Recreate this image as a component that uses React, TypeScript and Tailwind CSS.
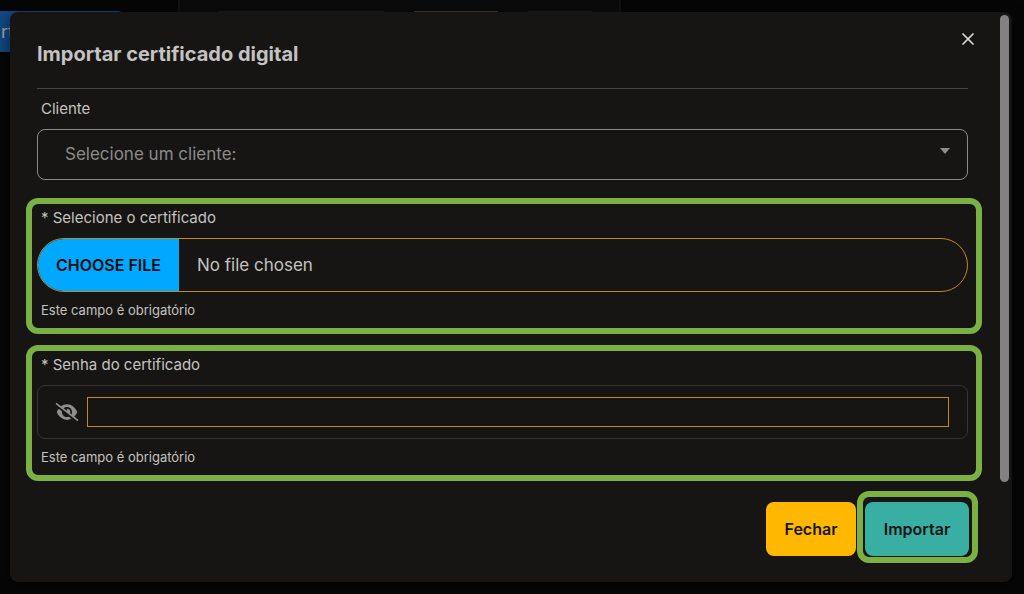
import { X } from 'lucide-react';
import { FaEyeSlash } from 'react-icons/fa6';

function PageBehind() {
  return (
    <div className="absolute inset-0 overflow-hidden bg-[#060606]" aria-hidden="true">
      <div className="flex">
        <div className="w-[178px] pt-[11px]">
          <button
            tabIndex={-1}
            className="h-[41px] w-[122px] rounded-r-sm bg-[#114985] pl-px text-left text-lg text-[#a9a9a9]"
          >
            rt
          </button>
        </div>
        <div className="flex h-[60px] w-[443px] items-start gap-[30px] border-x-2 border-[#131313] bg-[#0b0b0b] pl-[38px] pt-[11px]">
          <div className="h-px w-[166px] bg-[#1c1c1c]" />
          <div className="h-px w-[84px] bg-[#3a3835]" />
          <div className="h-px w-16 bg-[#1c1c1c]" />
        </div>
      </div>
    </div>
  );
}

export default function App() {
  return (
    <div className="relative min-h-screen bg-[#060606] pb-3 pl-[10px] pr-3 pt-3 font-['Inter',sans-serif] text-[#c4c3c1]">
      <PageBehind />

      {/* Modal */}
      <div
        role="dialog"
        aria-labelledby="modal-title"
        className="relative flex min-h-[570px] rounded-lg bg-[#161513] shadow-[0_4px_16px_rgba(0,0,0,0.6)]"
      >
        <div className="flex-1 pl-4">
          {/* Header */}
          <div className="ml-[11px] mr-[14px] flex items-start justify-between border-b border-[#454443] pb-5 pt-[11px]">
            <h1 id="modal-title" className="pt-[17px] text-xl leading-7 font-bold">
              Importar certificado digital
            </h1>
            <button aria-label="Fechar janela" className="-mr-4 p-1.5">
              <X className="h-5 w-5 text-[#dddcda]" strokeWidth={2} />
            </button>
          </div>

          {/* Cliente */}
          <div className="ml-[11px] mr-[14px] pt-2">
            <label htmlFor="cliente" className="block pl-1 text-[15px] leading-6">
              Cliente
            </label>
            <div className="relative mt-2">
              <select
                id="cliente"
                defaultValue=""
                className="h-[51px] w-full appearance-none rounded-lg border border-[#8a8a89] bg-transparent pl-[27px] pr-10 text-[17px] text-[#8b8a89]"
              >
                <option value="">Selecione um cliente:</option>
              </select>
              <svg
                viewBox="0 0 10 6"
                className="pointer-events-none absolute right-[18px] top-[19px] h-1.5 w-2.5 fill-[#8f8e8d]"
              >
                <path d="M0 0h10L5 6z" />
              </svg>
            </div>
          </div>

          {/* Certificado */}
          <div className="mt-[18px] rounded-xl border-6 border-[#7ab142] pb-2 pl-[5px] pr-2 pt-0.5">
            <label htmlFor="certificado" className="block pl-1 text-[15px] leading-6">
              * Selecione o certificado
            </label>
            <input
              id="certificado"
              type="file"
              className="mt-2 block h-[54px] w-full overflow-hidden rounded-full border border-[#c08a26] text-[17px] leading-[52px] file:mr-[18px] file:h-[52px] file:bg-[#00a8ff] file:px-[18px] file:text-base file:font-semibold file:uppercase file:text-[#0b0b0b]"
            />
            <p className="mt-2 pl-1 text-[13px] leading-5">Este campo é obrigatório</p>
          </div>

          {/* Senha */}
          <div className="mt-[11px] rounded-xl border-6 border-[#7ab142] pb-2 pl-[5px] pr-2 pt-0.5">
            <label htmlFor="senha" className="block pl-1 text-[15px] leading-6">
              * Senha do certificado
            </label>
            <div className="mt-2 flex h-[54px] items-center rounded-lg border border-[#353433] pl-[17px] pr-[18px]">
              <button aria-label="Mostrar senha" className="mr-2">
                <FaEyeSlash className="h-[18px] w-6 text-[#8f8d8d]" />
              </button>
              <input
                id="senha"
                type="password"
                className="h-[30px] min-w-0 flex-1 border border-[#c08a26] bg-transparent px-2 outline-none"
              />
            </div>
            <p className="mt-2 pl-1 text-[13px] leading-5">Este campo é obrigatório</p>
          </div>

          {/* Footer */}
          <div className="mt-[10px] flex items-end justify-end gap-px pr-1 text-base font-semibold text-[#141412]">
            <button className="mb-[7px] h-[54px] w-[90px] rounded-lg bg-[#ffb700]">Fechar</button>
            <div className="rounded-xl border-6 border-[#7ab142] pb-px pl-0.5 pr-[3px] pt-[5px]">
              <button className="block h-[54px] w-[104px] rounded-lg bg-[#39aea3]">Importar</button>
            </div>
          </div>
        </div>

        {/* Scrollbar */}
        <div className="ml-[18px] mr-[3px] w-[9px] pt-[3px]">
          <div className="h-[467px] rounded-full bg-[#838182]" />
        </div>
      </div>
    </div>
  );
}
